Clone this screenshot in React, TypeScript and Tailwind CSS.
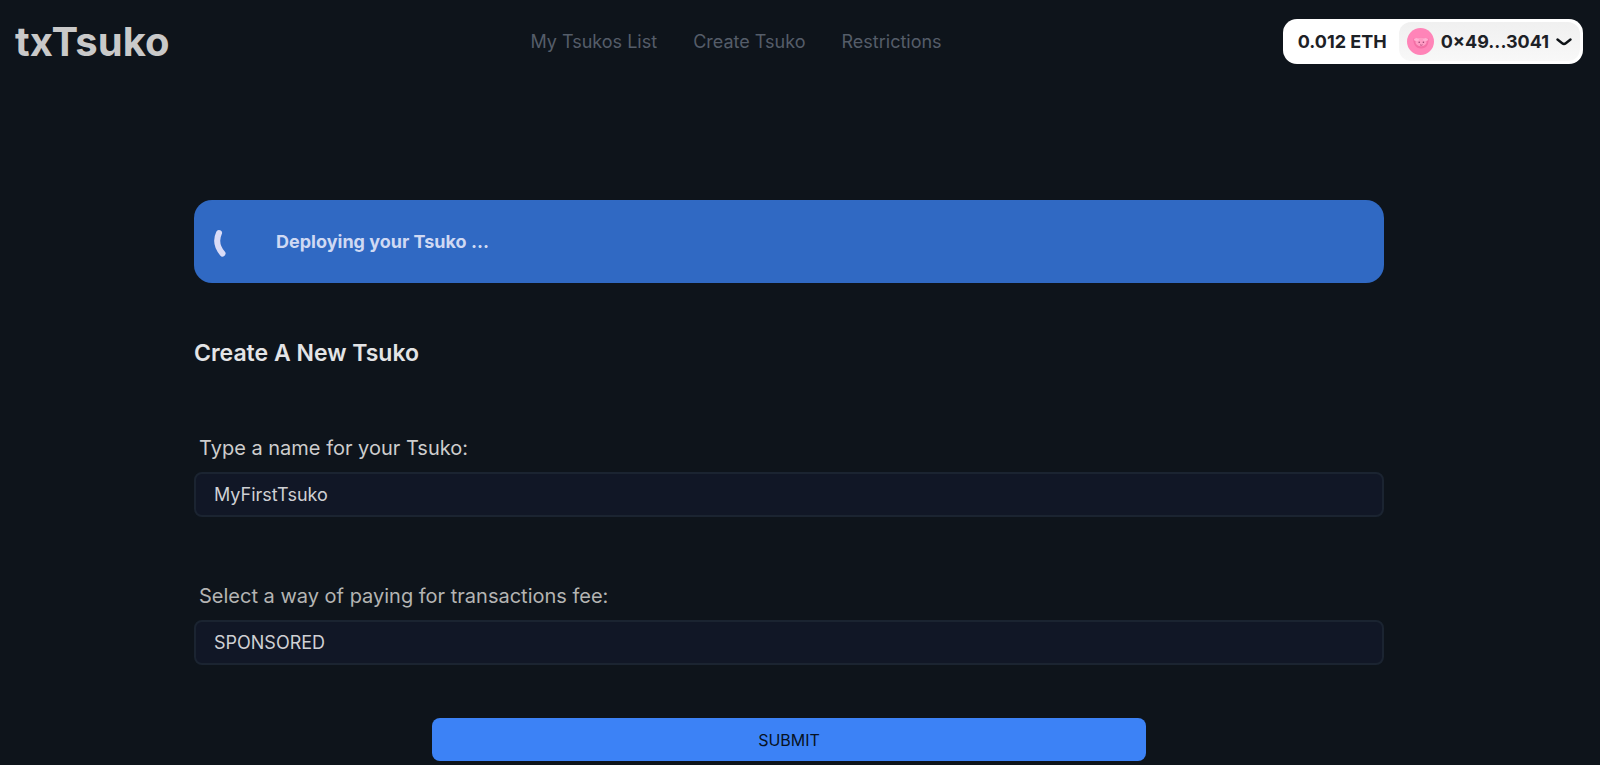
import { useState } from "react";

const links = ["My Tsukos List", "Create Tsuko", "Restrictions"];

function Avatar() {
  return (
    <svg viewBox="0 0 27 27" className="size-[27px] shrink-0" aria-hidden="true">
      <circle cx="13.5" cy="13.5" r="13.5" fill="#ff84b8" />
      <path d="M6.500 10.500q8-1.500 15 0c.5 6-2 10-7.500 10S6 16 6.500 10.500Z" fill="#f46fa5" />
      <ellipse cx="14" cy="14" rx="5.600" ry="4.200" fill="#ff9cc4" />
      <ellipse cx="9.500" cy="11.500" rx="2.600" ry="1.600" fill="#ffb0d2" />
      <ellipse cx="18.500" cy="11.500" rx="2.600" ry="1.600" fill="#ffb0d2" />
      <circle cx="12.200" cy="14.200" r=".8" fill="#984070" />
      <circle cx="16.400" cy="14.200" r=".8" fill="#984070" />
      <path d="M13 16.800q1.300.9 2.600 0" stroke="#b24d7f" strokeWidth=".9" fill="none" />
    </svg>
  );
}

function Wallet() {
  return (
    <button
      type="button"
      className="flex h-[45px] items-center rounded-[14px] bg-white p-[3px] text-[18px] leading-6 font-bold text-[#1d2126]"
    >
      <span className="px-3">0.012 ETH</span>
      <span className="flex h-full items-center gap-[7px] rounded-xl bg-linear-to-b from-[#f0f0f0] to-[#f8f8f8] px-2">
        <Avatar />
        <span>0×49...3041</span>
        <svg viewBox="0 0 16 8" className="h-2 w-4" fill="none" aria-hidden="true">
          <path
            d="M1.500 1.500 6.200 5.200Q8 6.600 9.800 5.200L14.500 1.500"
            stroke="#0e1216"
            strokeWidth="2.400"
            strokeLinecap="round"
          />
        </svg>
      </span>
    </button>
  );
}

const fieldClass =
  "block h-[45px] w-full appearance-none rounded-lg border-2 border-[#1b2431] bg-[#111726] px-[18px] text-[18px] leading-6 text-[#cfd0d4] outline-none";

export default function App() {
  const [name, setName] = useState("MyFirstTsuko");

  return (
    <div className="min-h-screen bg-[#0e141b] font-[Inter,'Liberation_Sans',sans-serif]">
      <header className="grid grid-cols-[1fr_auto_1fr] items-center pt-[19px] pr-[17px] pl-[15px]">
        <a href="#home" className="justify-self-start text-[40px] leading-[45px] font-bold text-[#c9c9c9]">
          txTsuko
        </a>
        <nav className="flex gap-9 pr-[126px] text-[18px] leading-6 text-[#555d69]">
          {links.map((label) => (
            <a key={label} href={"#" + label.toLowerCase().replaceAll(" ", "-")}>
              {label}
            </a>
          ))}
        </nav>
        <div className="justify-self-end">
          <Wallet />
        </div>
      </header>

      <main className="mr-[22px] pt-[136px]">
        <div className="mx-auto w-full max-w-[1190px]">
          <div role="status" className="flex h-[83px] items-center rounded-[18px] bg-[#3069c3] pl-5">
            <svg viewBox="0 0 14 32" className="h-8 w-[14px]" fill="none" aria-hidden="true">
              <path d="M5 7C2 13.500 2.500 20.500 8.500 27.500" stroke="#dadcf7" strokeWidth="6" strokeLinecap="round" />
            </svg>
            <p className="pl-12 text-[18px] leading-6 font-bold text-[#cfd9f3]">Deploying your Tsuko ...</p>
          </div>

          <h1 className="pt-[54px] text-[23px] leading-8 font-semibold text-[#e3e4e6]">Create A New Tsuko</h1>

          <form className="pt-[63px]" onSubmit={(event) => event.preventDefault()}>
            <label htmlFor="name" className="block pb-2 pl-[5px] text-[20px] leading-8 text-[#cdcdcd]">
              Type a name for your Tsuko:
            </label>
            <input
              id="name"
              type="text"
              value={name}
              onChange={(event) => setName(event.target.value)}
              className={fieldClass}
            />

            <label htmlFor="fee" className="block pt-[63px] pb-2 pl-[5px] text-[20px] leading-8 text-[#b4b4b3]">
              Select a way of paying for transactions fee:
            </label>
            <select id="fee" className={fieldClass}>
              <option>SPONSORED</option>
            </select>

            <button
              type="submit"
              className="mx-auto mt-[53px] block h-[43px] w-3/5 rounded-lg bg-[#3c82f6] text-[16px] leading-6 text-[#071223]"
            >
              SUBMIT
            </button>
          </form>
        </div>
      </main>
    </div>
  );
}
